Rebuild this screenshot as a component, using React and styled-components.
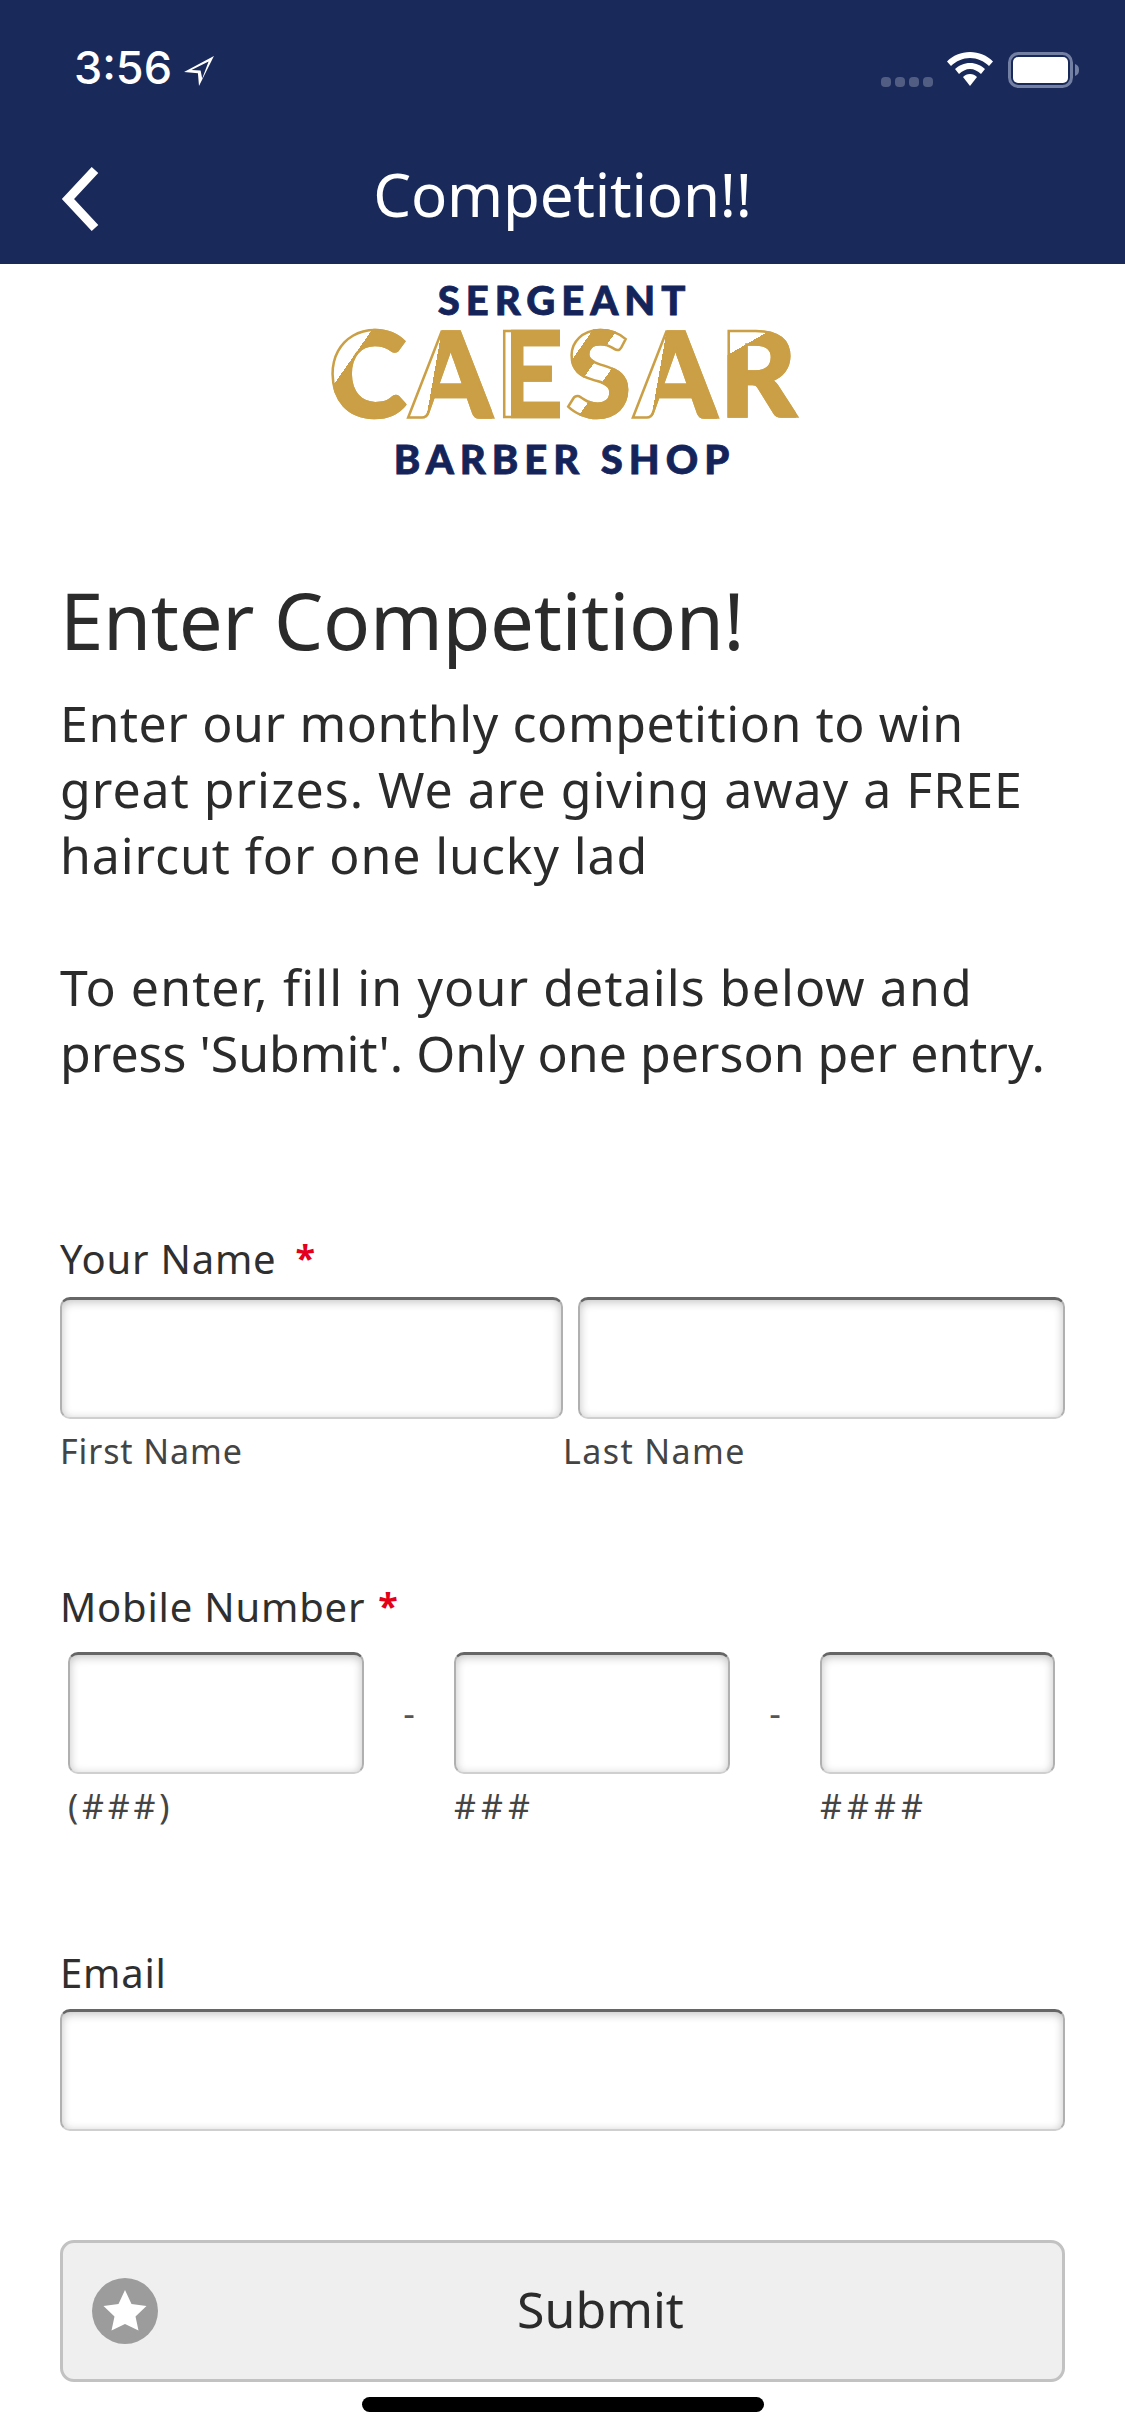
import styled, { createGlobalStyle } from "styled-components";

const GlobalStyle = createGlobalStyle`
  html, body {
    margin: 0;
    padding: 0;
    background: #fff;
  }
`;

const navy = "#19295a";
const gold = "#cb9f45";
const bodyFont = `"Noto Sans", "Open Sans", sans-serif`;

const Screen = styled.div`
  width: 1125px;
  height: 2436px;
  position: relative;
  overflow: hidden;
  background: #fff;
  font-family: ${bodyFont};
  color: #2b2b2b;
`;

const Header = styled.header`
  height: 264px;
  background: ${navy};
  color: #fff;
  display: flex;
  flex-direction: column;
`;

const StatusBar = styled.div`
  height: 140px;
  display: flex;
  align-items: flex-start;
  padding: 46px 45px 0 74px;
  box-sizing: border-box;
`;

const Time = styled.span`
  font-family: "Inter", "Liberation Sans", sans-serif;
  font-weight: 500;
  font-size: 45px;
  line-height: 44px;
`;

const Arrow = styled.svg`
  width: 32px;
  height: 32px;
  margin: 9px 0 0 11px;
`;

const StatusRight = styled.div`
  margin-left: auto;
  display: flex;
  align-items: flex-start;
  margin-top: 6px;
`;

const Dots = styled.div`
  display: flex;
  gap: 4px;
  margin: 25px 14px 0 0;
`;

const Dot = styled.i`
  width: 10px;
  height: 10px;
  border-radius: 4px;
  background: #515d82;
`;

const Wifi = styled.svg`
  width: 46px;
  height: 34px;
  margin-right: 15px;
`;

const Battery = styled.svg`
  width: 72px;
  height: 36px;
`;

const NavBar = styled.div`
  height: 124px;
  position: relative;
  display: flex;
  align-items: center;
  justify-content: center;
`;

const BackIcon = styled.svg`
  position: absolute;
  left: 60px;
  top: 26px;
  width: 42px;
  height: 66px;
`;

const Title = styled.h1`
  margin: -16px 0 0;
  font-size: 60px;
  font-weight: 400;
  letter-spacing: -0.2px;
`;

const Logo = styled.div`
  height: 226px;
  padding: 14px 0 0 4px;
  box-sizing: border-box;
  display: flex;
  flex-direction: column;
  align-items: center;
  font-family: "Lato", sans-serif;
  font-weight: 900;
`;

const LogoLine = styled.div`
  color: #14245a;
  font-size: ${(p) => p.$size}px;
  line-height: ${(p) => p.$lh}px;
  letter-spacing: ${(p) => p.$track}px;
  margin-top: ${(p) => p.$top || 0}px;
  -webkit-text-stroke: 0.8px #14245a;
`;

const CaesarRow = styled.div`
  display: flex;
  align-items: center;
  height: 100px;
  margin-left: -4px;
  gap: ${(p) => p.$gap}px;
`;

/* gold letter with white facets cut across it */
const CaesarLetter = styled.span`
  font-size: 118px;
  line-height: 100px;
  background: linear-gradient(${(p) => p.$angle}deg, ${(p) => p.$stops});
  -webkit-background-clip: text;
  background-clip: text;
  color: transparent;
  -webkit-text-stroke: 2.5px ${gold};
`;

const Content = styled.main`
  padding: 0 60px;
`;

const Heading = styled.h2`
  margin: 80px 0 0;
  font-size: 78px;
  line-height: 100px;
  font-weight: 400;
  letter-spacing: -0.35px;
`;

const Paragraph = styled.p`
  margin: ${(p) => p.$top}px 0 0;
  font-size: 50px;
  line-height: 66px;
`;

const Line = styled.span`
  display: block;
  letter-spacing: ${(p) => p.$track}px;
`;

const Field = styled.section`
  margin-top: ${(p) => p.$top}px;
`;

const Label = styled.div`
  font-size: 40px;
  line-height: 50px;
  letter-spacing: 0.8px;
  color: #2f2f2f;
`;

const Required = styled.span`
  color: #e3001b;
  margin-left: ${(p) => p.$gap}px;
  font-size: 36px;
  font-weight: 700;
  position: relative;
  top: -3px;
`;

const Row = styled.div`
  display: flex;
  margin-top: ${(p) => p.$top || 0}px;
  padding-left: ${(p) => p.$inset || 0}px;
`;

const InputColumn = styled.div`
  width: ${(p) => p.$width}px;
  flex: none;
`;

const Input = styled.div`
  height: 122px;
  margin-left: ${(p) => p.$offset || 0}px;
  box-sizing: border-box;
  border: 2px solid #b0b0b0;
  border-top: 3px solid #666;
  border-bottom-color: #cfcfcf;
  border-radius: 10px;
  background: #fff;
  box-shadow: inset 0 2px 10px rgba(0, 0, 0, 0.24);
`;

const Sublabel = styled.div`
  margin-top: 9px;
  font-size: 34px;
  line-height: 46px;
  letter-spacing: ${(p) => p.$track ?? 0.9}px;
  color: #444;
`;

const Dash = styled.span`
  flex: none;
  width: ${(p) => p.$width}px;
  text-align: center;
  font-size: 36px;
  line-height: 122px;
  color: #555;
`;

const SubmitButton = styled.button`
  width: 100%;
  height: 142px;
  margin-top: 109px;
  position: relative;
  display: block;
  border: 3px solid #c2c2c2;
  border-radius: 14px;
  background: #efefef;
  font-family: ${bodyFont};
  font-size: 50px;
  color: #2b2b2b;
  padding: 0 0 4px 76px;
`;

const StarBadge = styled.svg`
  position: absolute;
  left: 29px;
  top: 35px;
  width: 66px;
  height: 66px;
`;

const HomeIndicator = styled.div`
  position: absolute;
  left: 362px;
  top: 2397px;
  width: 402px;
  height: 15px;
  border-radius: 8px;
  background: #000;
`;

const letters = [
  ["C", 125, `#fff 0 33%, ${gold} 33% 100%`],
  ["A", 100, `#fff 0 34%, ${gold} 34% 100%`],
  ["E", 90, `#fff 0 24%, ${gold} 24% 100%`],
  ["S", 125, `#fff 0 24%, ${gold} 24% 42%, #fff 42% 58%, ${gold} 58% 100%`],
  ["A", 100, `#fff 0 34%, ${gold} 34% 100%`],
  ["R", 150, `#fff 0 26%, ${gold} 26% 100%`],
];

export default function App() {
  return (
    <Screen>
      <GlobalStyle />
      <Header>
        <StatusBar>
          <Time>3:56</Time>
          <Arrow viewBox="0 0 30 30">
            <path d="M29 1 L1 16 L14 17 L15 29 Z M24 6 L18 22 L16.5 14.5 L8 14 Z" fill="#fff" fillRule="evenodd" />
          </Arrow>
          <StatusRight>
            <Dots>
              <Dot />
              <Dot />
              <Dot />
              <Dot />
            </Dots>
            <Wifi viewBox="0 0 46 34">
              <path d="M23 0 C14 0 6 3.5 0 9.5 L4 14 C9 9 16 6 23 6 C30 6 37 9 42 14 L46 9.5 C40 3.5 32 0 23 0 Z" fill="#fff" />
              <path d="M23 11 C17 11 12 13.5 8 17 L12 22 C15 19 19 17 23 17 C27 17 31 19 34 22 L38 17 C34 13.5 29 11 23 11 Z" fill="#fff" />
              <path d="M23 22 C20 22 18 23 16 25 L23 34 L30 25 C28 23 26 22 23 22 Z" fill="#fff" />
            </Wifi>
            <Battery viewBox="0 0 72 36">
              <rect x="1.5" y="1.5" width="62" height="33" rx="9" fill="none" stroke="#7480a3" strokeWidth="3" />
              <rect x="5" y="5" width="55" height="26" rx="5" fill="#fff" />
              <path d="M67 12 C70 13 71 15 71 18 C71 21 70 23 67 24 Z" fill="#7480a3" />
            </Battery>
          </StatusRight>
        </StatusBar>
        <NavBar>
          <BackIcon viewBox="0 0 42 66">
            <path d="M35 4 L8 33 L35 62" fill="none" stroke="#fff" strokeWidth="9" />
          </BackIcon>
          <Title>Competition!!</Title>
        </NavBar>
      </Header>

      <Logo>
        <LogoLine $size={40} $lh={44} $track={6}>SERGEANT</LogoLine>
        <CaesarRow $gap={3}>
          {letters.map(([ch, angle, stops], i) => (
            <CaesarLetter key={i} $angle={angle} $stops={stops}>{ch}</CaesarLetter>
          ))}
        </CaesarRow>
        <LogoLine $size={40} $lh={56} $track={6} $top={9}>BARBER SHOP</LogoLine>
      </Logo>

      <Content>
        <Heading>Enter Competition!</Heading>
        <Paragraph $top={20}>
          <Line $track={0.6}>Enter our monthly competition to win</Line>
          <Line $track={1}>great prizes. We are giving away a FREE</Line>
          <Line $track={0.9}>haircut for one lucky lad</Line>
        </Paragraph>
        <Paragraph $top={66}>
          <Line $track={1.1}>To enter, fill in your details below and</Line>
          <Line $track={0}>press 'Submit'. Only one person per entry.</Line>
        </Paragraph>

        <Field $top={148}>
          <Label>Your Name<Required $gap={19}>*</Required></Label>
          <Row $top={11}>
            <InputColumn $width={503}>
              <Input />
              <Sublabel>First Name</Sublabel>
            </InputColumn>
            <InputColumn $width={502}>
              <Input $offset={15} />
              <Sublabel $track={1.4}>Last Name</Sublabel>
            </InputColumn>
          </Row>
        </Field>

        <Field $top={108}>
          <Label>Mobile Number<Required $gap={13}>*</Required></Label>
          <Row $top={18} $inset={8}>
            <InputColumn $width={296}>
              <Input />
              <Sublabel $track={3.8}>(###)</Sublabel>
            </InputColumn>
            <Dash $width={90}>-</Dash>
            <InputColumn $width={276}>
              <Input />
              <Sublabel $track={5}>###</Sublabel>
            </InputColumn>
            <Dash $width={90}>-</Dash>
            <InputColumn $width={235}>
              <Input />
              <Sublabel $track={5}>####</Sublabel>
            </InputColumn>
          </Row>
        </Field>

        <Field $top={119}>
          <Label>Email</Label>
          <Row $top={11}>
            <InputColumn $width={1005}>
              <Input />
            </InputColumn>
          </Row>
        </Field>

        <SubmitButton>
          <StarBadge viewBox="0 0 66 66">
            <circle cx="33" cy="33" r="33" fill="#9c9c9c" />
            <path d="M33 12 L39.5 26 L54.5 28 L43.5 38.5 L46.5 52.5 L33 46 L19.5 52.5 L22.5 38.5 L11.5 28 L26.5 26 Z" fill="#fff" />
          </StarBadge>
          Submit
        </SubmitButton>
      </Content>
      <HomeIndicator />
    </Screen>
  );
}
